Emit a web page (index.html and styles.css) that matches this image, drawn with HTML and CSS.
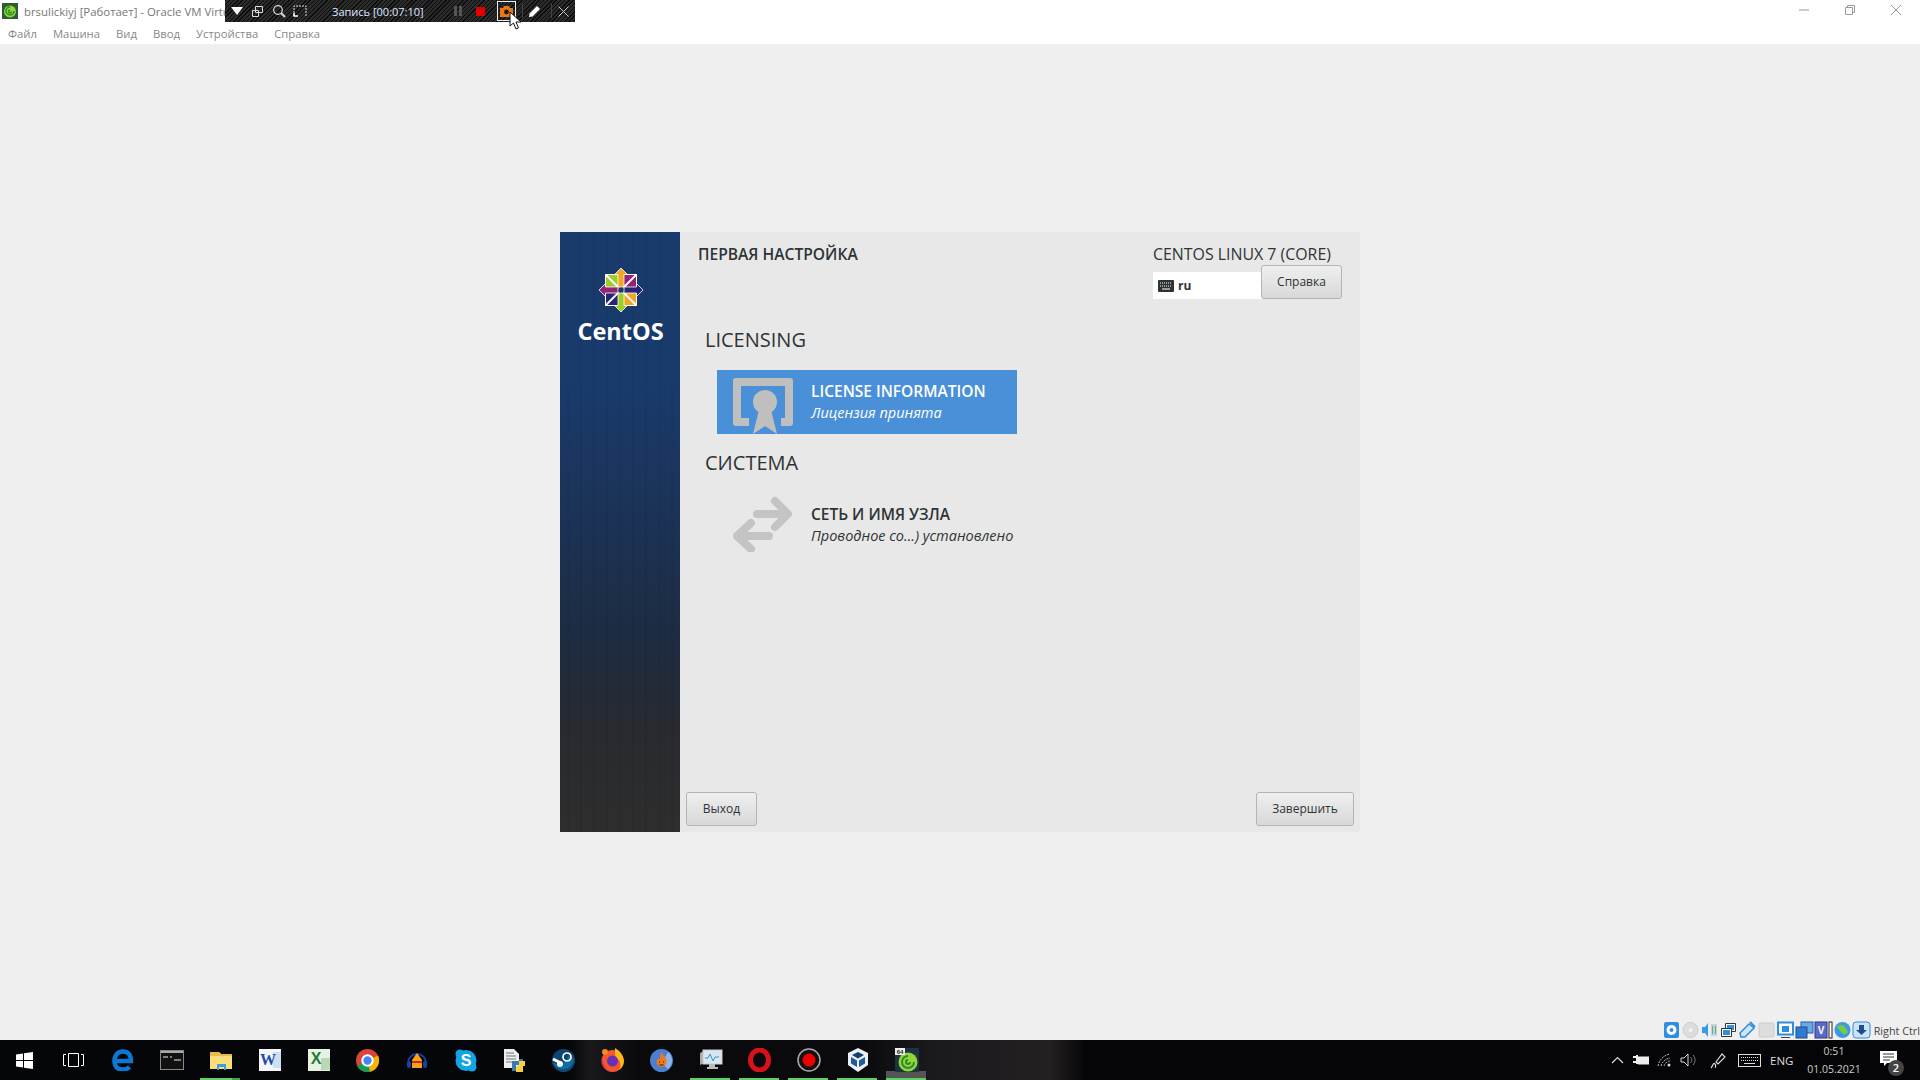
FILE: index.html
```html
<!DOCTYPE html>
<html lang="ru">
  <head>
    <meta charset="utf-8">
    <title>brsulickiyj [Работает] - Oracle VM VirtualBox</title>
    <link rel="stylesheet" href="styles.css">
  </head>
  <body>
    <div class="vmwin">
      <div class="titlebar">
        <svg class="vmicon" width="16" height="16" viewBox="0 0 16 16"><rect width="16" height="16" fill="#2e5c33"/><circle cx="8" cy="8.500" r="6" fill="#8fd63c"/><path d="M8 4a4 4 0 1 0 4 4M8 7a1.500 1.500 0 1 0 1.500 1.500" fill="none" stroke="#2f8a2a" stroke-width="1.500"/></svg>
        <span class="wintitle">brsulickiyj [Работает] - Oracle VM VirtualBox</span>
        <div class="winbtns">
          <svg width="46" height="20" viewBox="0 0 46 20"><path d="M18 10h10" stroke="#999"/></svg>
          <svg width="46" height="20" viewBox="0 0 46 20"><path d="M18.500 7.500h7v7h-7zM20.500 7.500v-2h7v7h-2" fill="none" stroke="#999"/></svg>
          <svg width="46" height="20" viewBox="0 0 46 20"><path d="M18 5l10 10M28 5l-10 10" stroke="#999"/></svg>
        </div>
      </div>
      <div class="menubar">
        <span>Файл</span><span>Машина</span><span>Вид</span><span>Ввод</span><span>Устройства</span><span>Справка</span>
      </div>

      <!-- recorder overlay -->
      <div class="recbar">
        <span class="recitem"><svg width="12" height="8" viewBox="0 0 12 8"><path d="M0 0h12L6 8z" fill="#fff"/></svg></span>
        <span class="recitem"><svg width="13" height="13" viewBox="0 0 13 13"><path d="M4.500 1.500h7v6h-7zM1.500 5.500h6v6h-6z" fill="none" stroke="#ddd"/></svg></span>
        <span class="recitem"><svg width="14" height="14" viewBox="0 0 14 14"><circle cx="6" cy="6" r="4.300" fill="none" stroke="#ddd" stroke-width="1.200"/><path d="M9 9l4 4" stroke="#ddd" stroke-width="2"/></svg></span>
        <span class="recitem"><svg width="14" height="12" viewBox="0 0 14 12"><path d="M1 11V1h12v10" fill="none" stroke="#ddd" stroke-dasharray="2 1"/><path d="M1 8v3h4" fill="none" stroke="#fff" stroke-width="1.500"/></svg></span>
        <span class="rectime">Запись [00:07:10]</span>
        <span class="recitem rec-pause"><svg width="8" height="10" viewBox="0 0 8 10"><path d="M0 0h3v10H0zM5 0h3v10H5z" fill="#555"/></svg></span>
        <span class="recitem rec-stop"><span class="recstop"></span></span>
        <span class="reccam"><svg width="13" height="11" viewBox="0 0 13 11"><path d="M0 2h3l1-2h5l1 2h3v9H0z" fill="#e8791a"/><circle cx="6.500" cy="6" r="2.400" fill="#2a1408"/></svg></span>
        <span class="recsep"></span>
        <span class="recitem"><svg width="13" height="13" viewBox="0 0 13 13"><path d="M1 12l.6-3.500L9 1l3 3-7.500 7.400z" fill="#fff"/></svg></span>
        <span class="recsep"></span>
        <span class="recitem"><svg width="11" height="11" viewBox="0 0 11 11"><path d="M.5.500l10 10M10.500.500l-10 10" stroke="#ccc"/></svg></span>
      </div>
      <svg class="cursor" width="14" height="20" viewBox="0 0 14 20"><path d="M1 1v14l3.500-3 2.500 6 2.500-1-2.500-6h5z" fill="#fff" stroke="#111"/></svg>

      <div class="vmscreen">
        <div class="panel">
          <aside class="sidebar">
            <svg class="logo" width="46" height="46" viewBox="0 0 46 46">
              <path d="M7.500 7.500H23V23H7.500z" fill="#9ccd2a"/>
              <path d="M23 7.500h15.500V23H23z" fill="#932279"/>
              <path d="M23 23h15.500v15.500H23z" fill="#efa724"/>
              <path d="M7.500 23H23v15.500H7.500z" fill="#262577"/>
              <path d="M7.500 7.500h31v31h-31z" fill="none" stroke="#fff"/>
              <path d="M7.500 7.500l31 31M38.500 7.500l-31 31" stroke="#fff" stroke-width="1.800"/>
              <path d="M23 1l6.500 6.500h-3.500V20h-6V7.500h-3.500z" fill="#efa724" stroke="#fff" stroke-width=".8"/>
              <path d="M45 23l-6.500 6.500V26H26v-6h12.500v-3.500z" fill="#262577" stroke="#fff" stroke-width=".8"/>
              <path d="M23 45l-6.500-6.500H20V26h6v12.500h3.500z" fill="#9ccd2a" stroke="#fff" stroke-width=".8"/>
              <path d="M1 23l6.500-6.500V20H20v6H7.500v3.500z" fill="#932279" stroke="#fff" stroke-width=".8"/>
              <rect x="20.500" y="20.500" width="5" height="5" fill="#1a3a6b"/>
            </svg>
            <div class="brand">CentOS</div>
          </aside>
          <main class="spoke">
            <header class="spokehead">
              <h1>ПЕРВАЯ НАСТРОЙКА</h1>
              <div class="headright">
                <div class="product">CENTOS LINUX 7 (CORE)</div>
                <div class="headrow">
                  <div class="layout">
                    <svg width="16" height="12" viewBox="0 0 16 12"><rect width="16" height="12" rx="1" fill="#2e3436"/><path d="M2 3h12M2 6h12" stroke="#fff" stroke-dasharray="1 1"/><path d="M4 9h8" stroke="#fff"/></svg>
                    <b>ru</b>
                  </div>
                  <button class="btn btn-help">Справка</button>
                </div>
              </div>
            </header>

            <h2 class="cat cat-first">LICENSING</h2>
            <div class="tile tile-on">
              <svg width="60" height="56" viewBox="0 0 60 56">
                <path d="M3 0h54a3 3 0 0 1 3 3v42a3 3 0 0 1-3 3H48v-8h4V8H8v32h8v8H3a3 3 0 0 1-3-3V3a3 3 0 0 1 3-3z" fill="#bfbfbf"/>
                <circle cx="32" cy="24" r="12" fill="#bfbfbf"/>
                <path d="M26 32h12l6 24-12-8-12 8z" fill="#bfbfbf"/>
              </svg>
              <div class="tiletext">
                <div class="tilename">LICENSE INFORMATION</div>
                <div class="tilestatus">Лицензия принята</div>
              </div>
            </div>

            <h2 class="cat cat-next">СИСТЕМА</h2>
            <div class="tile tile-plain">
              <svg width="60" height="56" viewBox="0 0 60 56" fill="none" stroke="#c4c4c4" stroke-width="8" stroke-linecap="round" stroke-linejoin="round">
                <path d="M24 18h30M42 5l13 13-13 13"/>
                <path d="M36 40H5M18 27L4 40l14 13"/>
              </svg>
              <div class="tiletext">
                <div class="tilename">СЕТЬ И ИМЯ УЗЛА</div>
                <div class="tilestatus">Проводное со...) установлено</div>
              </div>
            </div>

            <footer class="spokefoot">
              <button class="btn btn-quit">Выход</button>
              <button class="btn btn-done">Завершить</button>
            </footer>
          </main>
        </div>

        <div class="vmstatus">
          <svg width="19" height="18" viewBox="0 0 19 18"><rect x="2" y="1" width="15" height="16" rx="2" fill="#2f8ee0"/><circle cx="9.500" cy="9" r="5" fill="#fff"/><circle cx="9.500" cy="9" r="2" fill="#2f8ee0"/></svg>
          <svg width="19" height="18" viewBox="0 0 19 18"><circle cx="9.500" cy="9" r="7.500" fill="#ddd" stroke="#ccc"/><circle cx="9.500" cy="9" r="2" fill="#f2f2f2"/></svg>
          <svg width="19" height="18" viewBox="0 0 19 18"><path d="M2 6h3l3-4v14l-3-4H2z" fill="#3a9ae8"/><path d="M11 3h6v12h-6z" fill="#c5d3e0"/><path d="M12 5h1v8h-1zM15 5h1v8h-1z" fill="#6a8"/></svg>
          <svg width="19" height="18" viewBox="0 0 19 18"><path d="M6.500 2.500h10v8h-10z" fill="#fff" stroke="#333"/><path d="M8 4h7v5H8z" fill="#2f8ee0"/><path d="M2.500 7.500h10v8h-10z" fill="#fff" stroke="#333"/><path d="M4 9h7v5H4z" fill="#2f8ee0"/></svg>
          <svg width="19" height="18" viewBox="0 0 19 18"><path d="M2 12L11 3l5 4-9 9H3z" fill="#cfe6fb" stroke="#2f8ee0" stroke-width="1.500"/><path d="M12 1l5 5" stroke="#2f8ee0" stroke-width="2"/></svg>
          <svg width="19" height="18" viewBox="0 0 19 18"><rect x="2" y="2" width="15" height="14" rx="1" fill="#ddd" stroke="#ccc"/></svg>
          <svg width="19" height="18" viewBox="0 0 19 18"><rect x="2" y="1.500" width="15" height="12" fill="#fff" stroke="#2f8ee0" stroke-width="2"/><path d="M6 8h7" stroke="#2f8ee0" stroke-width="6"/><path d="M5 16.500h9" stroke="#444"/></svg>
          <svg width="19" height="18" viewBox="0 0 19 18"><rect x="6" y="1" width="12" height="11" fill="#6aa9e8" stroke="#2a5c9a"/><rect x="1" y="6" width="11" height="11" fill="#2f7ad0" stroke="#1f4f8a"/></svg>
          <svg width="19" height="18" viewBox="0 0 19 18"><rect x="1" y="1" width="12" height="16" fill="#5a6ac8" stroke="#2a3a8a"/><text class="vtag" x="7" y="13">V</text><rect x="15" y="1" width="3" height="16" fill="#fff" stroke="#222"/></svg>
          <svg width="19" height="18" viewBox="0 0 19 18"><circle cx="9.500" cy="9" r="8" fill="#3a9ae8"/><path d="M4 6c3-3 7-2 8 0l3 5c-2 3-5 3-6 1z" fill="#7ac943"/></svg>
          <svg width="19" height="18" viewBox="0 0 19 18"><rect x="1" y="1" width="17" height="16" rx="3" fill="#cfe3f8" stroke="#2f8ee0"/><path d="M7 4h5v5h3l-5.500 5L4 9h3z" fill="#1d4f8f"/></svg>
          <span class="hostkey">Right Ctrl</span>
        </div>
      </div>
    </div>

    <div class="taskbar">
      <span class="taskicon"><svg width="17" height="17" viewBox="0 0 17 17"><path d="M0 2.400L7 1.400V8H0zM8 1.300L17 0v8H8zM0 9h7v6.600L0 14.600zM8 9h9v8l-9-1.300z" fill="#fff"/></svg></span>
      <span class="taskicon"><svg width="21" height="14" viewBox="0 0 21 14"><path d="M5.500.500h10v13h-10z" fill="none" stroke="#fff"/><path d="M3 1.500H.500v11H3M18 1.500h2.500v11H18" fill="none" stroke="#fff"/></svg></span>
      <span class="taskicon"><svg width="22" height="22" viewBox="0 0 22 22"><path d="M3 12h16c0-6-3-9.500-8-9.500S2.500 6 2.500 12s3.500 8.500 8 8.500c3 0 5.500-1 7-2.500" fill="none" stroke="#0a78d4" stroke-width="4.500"/></svg></span>
      <span class="taskicon"><svg width="24" height="20" viewBox="0 0 24 20"><rect x=".5" y=".5" width="23" height="19" fill="#111" stroke="#888"/><path d="M1 1h22v2H1z" fill="#aaa"/><path d="M3 7h5M10 7h2M14 10h7" stroke="#eee"/></svg></span>
      <span class="taskicon is-open is-split"><svg width="24" height="20" viewBox="0 0 24 20"><path d="M1 2h9l2 2h11v15H1z" fill="#fddc7a"/><path d="M1 2h9l2 2h11v2H1z" fill="#e9b949"/><path d="M8 14h9v6h-2v-3h-5v3H8z" fill="#3aa0e0"/></svg></span>
      <span class="taskicon"><svg width="22" height="22" viewBox="0 0 22 22"><rect width="22" height="22" fill="#f4f6fa"/><rect x="14" y="3" width="8" height="16" fill="#cfdff2"/><text class="wtag" x="9" y="16">W</text></svg></span>
      <span class="taskicon"><svg width="22" height="22" viewBox="0 0 22 22"><rect width="22" height="22" fill="#e8f2e4"/><rect x="13" y="9" width="9" height="12" fill="#bcd8b0"/><text class="xtag" x="8" y="15">X</text></svg></span>
      <span class="taskicon"><svg width="23" height="23" viewBox="0 0 23 23"><circle cx="11.500" cy="11.500" r="11.500" fill="#db4437"/><path d="M11.500 11.500L1 17A11.500 11.500 0 0 0 14 22.700z" fill="#0f9d58"/><path d="M11.500 11.500L14 22.700A11.500 11.500 0 0 0 22 6.500z" fill="#f4b400"/><circle cx="11.500" cy="11.500" r="5.200" fill="#4285f4" stroke="#fff" stroke-width="2"/></svg></span>
      <span class="taskicon"><svg width="22" height="20" viewBox="0 0 22 20"><path d="M2 13a9 9 0 0 1 18 0" fill="none" stroke="#1c3fa8" stroke-width="2"/><rect x="1" y="11" width="4" height="7" rx="2" fill="#1c3fa8"/><rect x="17" y="11" width="4" height="7" rx="2" fill="#1c3fa8"/><path d="M11 3l5 7v8H6v-8z" fill="#f6a21a"/><path d="M6 12h10" stroke="#d22" stroke-width="2"/></svg></span>
      <span class="taskicon"><svg width="22" height="23" viewBox="0 0 22 23"><circle cx="11" cy="11.500" r="10.500" fill="#12a5e6"/><circle cx="5" cy="5" r="4.500" fill="#12a5e6"/><circle cx="17" cy="18" r="4.500" fill="#12a5e6"/><text class="stag" x="11" y="17">S</text></svg></span>
      <span class="taskicon"><svg width="23" height="24" viewBox="0 0 23 24"><path d="M1 1h10l5 5v14H1z" fill="#eee"/><path d="M3 5h8M3 8h10M3 11h10M3 14h7" stroke="#777"/><path d="M9 13h7v-2h4v6h-7v6H9z" fill="#3b78ad"/><path d="M16 13h6v5h-2v6h-7v-6h3z" fill="#f6cf45"/></svg></span>
      <span class="taskicon"><svg width="23" height="23" viewBox="0 0 23 23"><circle cx="11.500" cy="11.500" r="11.500" fill="#10456f"/><path d="M0 13l8 3 7-5 2-5 5 4a11 11 0 0 1-21 4z" fill="#0f6ea0"/><circle cx="15" cy="8" r="4" fill="none" stroke="#fff" stroke-width="1.700"/><path d="M1 10l8 4" stroke="#fff" stroke-width="3"/><circle cx="8" cy="15" r="3" fill="#fff"/></svg></span>
      <span class="taskicon"><svg width="23" height="24" viewBox="0 0 23 24"><circle cx="11.500" cy="13" r="11" fill="#f0582d"/><path d="M14 0c5 3 9 8 9 13a11 11 0 0 1-5 9c2-3 2-8-1-11-3 0-3-5-3-11z" fill="#fcb71c"/><circle cx="11.500" cy="13" r="5.500" fill="#6a2fb5"/><path d="M1 9c0 8 5 14 10 15-6-1-11-6-10-15z" fill="#e31587"/><circle cx="4" cy="4" r="3" fill="#f88a1d"/></svg></span>
      <span class="taskicon"><svg width="23" height="23" viewBox="0 0 23 23"><circle cx="11.500" cy="11.500" r="11.500" fill="#4d7fd0"/><path d="M18 3a11 11 0 0 1 0 17l-6-6z" fill="#8fb3e8"/><path d="M11.500 3c1 3 5 5 5 10a5 5 0 0 1-10 0c0-2 1-3 2-4 0 1 1 2 1.500 1 .5-2 0-4 1.500-7z" fill="#ee7a1e"/><path d="M9 13h1M13 13h1M9.500 16h4" stroke="#222"/></svg></span>
      <span class="taskicon is-open"><svg width="24" height="22" viewBox="0 0 24 22"><path d="M1 4l4-2v12l-4 2z" fill="#aaa"/><rect x="4" y="1" width="19" height="14" fill="#d8e6ef" stroke="#ccc"/><path d="M6 9h3l2-4 3 7 2-4h4" fill="none" stroke="#3a8fd0"/><path d="M10 15h6v3h3v2H8v-2h2z" fill="#bbb"/></svg></span>
      <span class="taskicon is-open"><svg width="23" height="24" viewBox="0 0 23 24"><ellipse cx="11.500" cy="12" rx="9" ry="10" fill="none" stroke="#d8111c" stroke-width="5"/></svg></span>
      <span class="taskicon is-open"><svg width="24" height="24" viewBox="0 0 24 24"><circle cx="12" cy="12" r="11" fill="#111" stroke="#aaa" stroke-width="1.500"/><circle cx="12" cy="12" r="6.500" fill="#ee0000"/></svg></span>
      <span class="taskicon is-open"><svg width="22" height="24" viewBox="0 0 22 24"><path d="M11 0l10 5v12l-10 7L1 17V5z" fill="#eaf0f6"/><path d="M11 4l6 3-6 3.500L5 7z" fill="#14406e"/><path d="M4 9l6 3.500V19l-6-3.500zM18 9l-6 3.500V19l6-3.500z" fill="#1d5c96"/></svg></span>
      <span class="taskicon is-open is-hover"><svg width="24" height="24" viewBox="0 0 24 24"><rect width="24" height="24" fill="#1c3340"/><circle cx="13" cy="14" r="9.500" fill="#8fd63c"/><path d="M13 8a6 6 0 1 0 6 6M13 12a2 2 0 1 0 2 2" fill="none" stroke="#2f8a2a" stroke-width="2"/><rect x="0" y="0" width="10" height="7" fill="#eee"/><text class="vmtag" x="5" y="6">64</text></svg></span>

      <div class="tray">
        <svg class="tray-caret" width="13" height="8" viewBox="0 0 13 8"><path d="M1 7l5.500-5.500L12 7" fill="none" stroke="#ddd" stroke-width="1.200"/></svg>
        <svg class="tray-batt" width="17" height="12" viewBox="0 0 17 12"><path d="M0 2h3v2H0zM0 7h3v2H0zM3 1h2v9H3z" fill="#eee"/><rect x="5" y="2.500" width="11" height="8" fill="#eee"/></svg>
        <svg class="tray-wifi" width="14" height="14" viewBox="0 0 14 14"><path d="M1 13C2 7 7 2 13 1M4 13c1-4 4-7 9-8M7 13c.5-2 3-5 6-5" fill="none" stroke="#bbb" stroke-dasharray="2 1"/><circle cx="12" cy="12" r="1.500" fill="#ddd"/></svg>
        <svg class="tray-vol" width="17" height="14" viewBox="0 0 17 14"><path d="M1 5h3l4-4v12l-4-4H1z" fill="none" stroke="#ddd"/><path d="M10.500 4a4 4 0 0 1 0 6M13 2a7 7 0 0 1 0 10" fill="none" stroke="#777"/></svg>
        <svg class="tray-pen" width="16" height="17" viewBox="0 0 16 17"><path d="M1 16c2-2 2-6 4-4s-1 4 1 3M6 10l6-8 3 3-7 7z" fill="none" stroke="#ddd" stroke-width="1.200"/></svg>
        <svg class="tray-kbd" width="23" height="13" viewBox="0 0 23 13"><rect x=".5" y=".5" width="22" height="12" fill="none" stroke="#ddd"/><path d="M3 3.500h17M3 6.500h17" stroke="#ddd" stroke-dasharray="1 1"/><path d="M6 9.500h11" stroke="#ddd"/></svg>
        <span class="tray-lang">ENG</span>
        <div class="clock"><span>0:51</span><span>01.05.2021</span></div>
        <span class="notif">
          <svg width="17" height="15" viewBox="0 0 17 15"><path d="M0 0h17v12H7l-3 3v-3H0z" fill="#fff"/><path d="M3 3h11M3 6h11M3 9h7" stroke="#333"/></svg>
          <span class="notifcount">2</span>
        </span>
      </div>
    </div>
  </body>
</html>
```

FILE: styles.css
```css
html, body { margin: 0; height: 100%; }
body { width: 1920px; height: 1080px; overflow: hidden; display: flex; flex-direction: column; font-family: "Open Sans", "Noto Sans", sans-serif; background: #efefef; }

.vmwin { flex: 1; min-height: 0; display: flex; flex-direction: column; position: relative; }

/* host window chrome */
.titlebar { height: 22px; background: #fff; display: flex; align-items: center; padding-left: 2px; }
.vmicon { flex: none; }
.wintitle { margin-left: 6px; font-size: 11.400px; color: #777; white-space: nowrap; }
.winbtns { margin-left: auto; display: flex; margin-right: 1px; margin-bottom: 2px; }
.menubar { height: 22px; background: #fff; display: flex; align-items: center; padding-left: 8px; gap: 16px; font-size: 11.300px; color: #888; }

.recbar { position: absolute; left: 225px; top: 0; width: 350px; height: 22px; box-sizing: border-box; padding-left: 1px; display: flex; align-items: center; background: repeating-linear-gradient(135deg, #0c0c0c 0 1px, #2b2b2b 1px 3px); }
.recitem { flex: none; width: 21px; height: 22px; display: flex; align-items: center; justify-content: center; }
.rectime { flex: none; width: 92px; margin-left: 22px; font-size: 11px; color: #dfe8ff; white-space: nowrap; }
.rec-pause { margin-left: 23px; }
.rec-stop { margin-left: 2px; }
.recstop { width: 9px; height: 9px; background: #e00000; }
.reccam { flex: none; width: 17px; height: 18px; margin-left: 6px; border: 1px solid #eee; display: flex; align-items: center; justify-content: center; }
.recsep { flex: none; width: 1px; height: 14px; margin: 0 1px 0 6px; background: #444; }
.cursor { position: absolute; left: 509px; top: 11px; }

/* guest screen */
.vmscreen { flex: 1; min-height: 0; display: flex; flex-direction: column; align-items: center; padding-top: 188px; box-sizing: border-box; }
.panel { flex: none; width: 800px; height: 600px; display: flex; background: #e8e8e8; color: #2e3436; }

.sidebar { flex: none; width: 120px; display: flex; flex-direction: column; align-items: center; padding-top: 35px; box-sizing: border-box; background: repeating-linear-gradient(90deg, rgba(255,255,255,.006) 0 7px, rgba(0,0,0,.018) 7px 9px, rgba(255,255,255,.006) 9px 13px), linear-gradient(180deg, #17396b 0%, #17396b 25%, #1a3258 45%, #1c2a40 68%, #27292e 83%, #2c2c2c 100%); }
.logo { margin-left: 2px; }
.brand { margin-top: 3px; margin-left: 1px; font-size: 23.500px; line-height: 30px; font-weight: 700; color: #fff; }

.spoke { flex: 1; min-width: 0; display: flex; flex-direction: column; padding: 0 6px 6px; box-sizing: border-box; }
.spokehead { display: flex; justify-content: space-between; padding: 12px 12px 0; }
.spokehead h1 { margin: 0; font-size: 15.600px; line-height: 21px; font-weight: 600; }
.headright { width: 189px; }
.product { font-size: 15.900px; line-height: 21px; white-space: nowrap; }
.headrow { display: flex; align-items: flex-start; }
.layout { width: 109px; height: 27px; margin-top: 7px; background: #fff; box-sizing: border-box; padding-left: 5px; display: flex; align-items: center; gap: 4px; font-size: 12px; }
.layout svg { flex: none; }

.btn { font: 12px "Open Sans", "Noto Sans", sans-serif; color: #2e3436; height: 34px; padding: 0 0 2px; border: 1px solid #b4b4b4; border-radius: 3px; background: linear-gradient(180deg, #efefef, #d8d8d8); }
.btn-help { width: 81px; margin-left: -1px; }
.btn-quit { width: 71px; }
.btn-done { width: 98px; }

.cat { margin: 0; padding-left: 19px; font-size: 20px; line-height: 28px; font-weight: 400; }
.cat-first { margin-top: 27px; }
.cat-next { margin-top: 15px; }
.tile { width: 300px; height: 64px; margin: 16px 0 0 31px; box-sizing: border-box; padding: 8px 0 0 16px; display: flex; }
.tile-on { background: #4a90d9; color: #fff; }
.tile-plain { padding-top: 3px; }
.tile svg { flex: none; }
.tiletext { margin-left: 18px; padding-top: 3px; }
.tile-plain .tiletext { padding-top: 8px; }
.tilename { font-size: 15.500px; line-height: 21px; font-weight: 600; white-space: nowrap; }
.tilestatus { font-size: 14.500px; line-height: 21px; font-style: italic; white-space: nowrap; }

.spokefoot { margin-top: auto; display: flex; justify-content: space-between; }

.vmstatus { margin-top: auto; height: 20px; align-self: flex-end; display: flex; align-items: center; }
.hostkey { margin-left: 3px; font-size: 10.800px; color: #444; white-space: nowrap; }

.vtag { font: 700 10px "Liberation Sans", sans-serif; fill: #fff; text-anchor: middle; }
.wtag { font: 700 16px "Liberation Serif", serif; fill: #1d4fa8; text-anchor: middle; }
.xtag { font: 700 16px "Liberation Sans", sans-serif; fill: #1f7a3a; text-anchor: middle; }
.stag { font: 700 16px "Liberation Sans", sans-serif; fill: #fff; text-anchor: middle; }
.vmtag { font: 700 6px "Liberation Sans", sans-serif; fill: #222; text-anchor: middle; }

/* windows taskbar */
.taskbar { flex: none; height: 40px; display: flex; color: #ddd; background: linear-gradient(90deg, #05060a 0, #05060a 570px, #19181b 590px, #0a0a0c 640px, #0a0a0c 860px, #1a191c 930px, #242022 1050px, #050507 1085px, #050507 100%); }
.taskicon { flex: none; width: 49px; display: flex; align-items: center; justify-content: center; position: relative; }
.is-open::after { content: ""; position: absolute; left: 4px; right: 5px; bottom: 0; height: 2px; background: #5fd068; }
.is-split::after { background: linear-gradient(90deg, #5fd068 0 32px, #3fa548 32px); }
.is-hover { background: linear-gradient(180deg, transparent 0 31px, #555 31px); background-size: 40px 100%; background-position: 4px 0; background-repeat: no-repeat; }

.tray { margin-left: auto; display: flex; align-items: center; }
.tray-caret { margin-right: 9px; }
.tray-batt { margin-right: 7px; }
.tray-wifi { margin-right: 9px; }
.tray-vol { margin-right: 13px; }
.tray-pen { margin-right: 12px; }
.tray-kbd { margin-right: 9px; }
.tray-lang { width: 26px; font-size: 11.500px; }
.clock { width: 74px; margin-left: 1px; display: flex; flex-direction: column; align-items: center; line-height: 18px; font-size: 10.500px; color: #ccc; }
.notif { position: relative; width: 49px; display: flex; justify-content: center; box-sizing: border-box; padding-right: 15px; margin-bottom: 4px; }
.notifcount { position: absolute; left: 17px; top: 9px; width: 16px; height: 16px; border-radius: 50%; background: #444; color: #fff; font-size: 11px; line-height: 16px; text-align: center; font-weight: 600; }
```
